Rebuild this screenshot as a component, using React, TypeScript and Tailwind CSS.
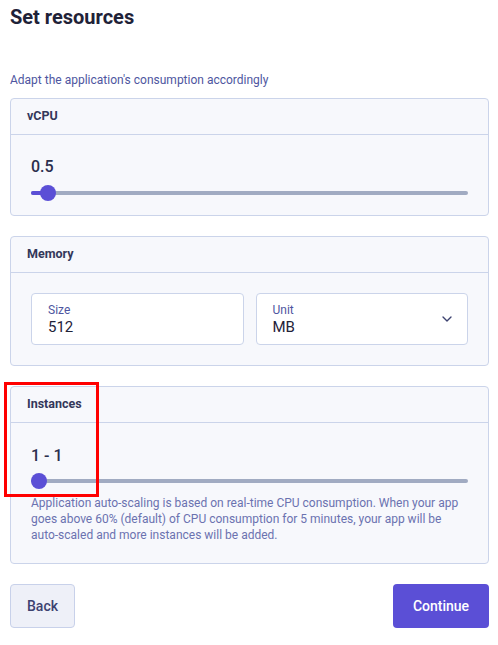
import React from 'react';
import { ChevronDown } from 'lucide-react';

const Card: React.FC<{ title: string; children: React.ReactNode }> = ({ title, children }) => (
    <div className="rounded-[4px] border border-[#cbd4ea] bg-[#f7f8fc]">
        <div className="h-[36px] flex items-center px-[16px] border-b border-[#cbd4ea]">
            <span className="text-[12.5px] font-bold text-[#33375a]">{title}</span>
        </div>
        {children}
    </div>
);

const Slider: React.FC<{ pct: number }> = ({ pct }) => (
    <div className="relative h-[16px] flex items-center">
        <div className="w-full h-[4px] rounded-full bg-[#a1abc2]" />
        <div className="absolute left-0 h-[4px] rounded-full bg-[#5b4fd6]" style={{ width: `${pct}%` }} />
        <div
            className="absolute w-[16px] h-[16px] rounded-full bg-[#5b4fd6]"
            style={{ left: `calc(${pct}% - ${pct === 0 ? 0 : 8}px)` }}
        />
    </div>
);

export default function App() {
    return (
        <div className="relative w-[498px] h-[645px] bg-white pl-[10px] pr-[9px] pt-[4px] font-['Roboto',sans-serif] text-[#2b2e4d]">
            <h1 className="text-[20px] font-bold leading-[26px] text-[#1f2238]">Set resources</h1>
            <p className="mt-[42px] text-[12px] leading-[16px] text-[#4e56a0]">
                Adapt the application's consumption accordingly
            </p>

            <div className="mt-[10px] flex flex-col gap-[20px]">
                {/* vCPU */}
                <Card title="vCPU">
                    <div className="px-[20px] pt-[22px] pb-[14px]">
                        <div className="text-[16px] leading-[20px] font-medium mb-[8px]">0.5</div>
                        <Slider pct={4} />
                    </div>
                </Card>

                {/* Memory */}
                <Card title="Memory">
                    <div className="px-[20px] pt-[20px] pb-[20px] grid grid-cols-2 gap-[12px]">
                        <div className="h-[52px] rounded-[4px] border border-[#cbd4ea] bg-white px-[16px] pt-[9px]">
                            <div className="text-[12px] leading-[15px] text-[#4e56a0]">Size</div>
                            <div className="text-[15px] leading-[18px] text-[#1f2238]">512</div>
                        </div>
                        <div className="h-[52px] rounded-[4px] border border-[#cbd4ea] bg-white pl-[16px] pr-[12px] pt-[9px] flex items-start justify-between">
                            <div>
                                <div className="text-[12px] leading-[15px] text-[#4e56a0]">Unit</div>
                                <div className="text-[15px] leading-[18px] text-[#1f2238]">MB</div>
                            </div>
                            <ChevronDown className="mt-[8px] w-[16px] h-[16px] text-[#3d4270]" strokeWidth={2} />
                        </div>
                    </div>
                </Card>

                {/* Instances */}
                <Card title="Instances">
                    <div className="px-[20px] pt-[23px] pb-[20px]">
                        <div className="text-[16px] leading-[20px] font-medium mb-[7px]">1 - 1</div>
                        <Slider pct={0} />
                        <p className="mt-[6px] text-[12px] leading-[16px] text-[#6b72b0]">
                            Application auto-scaling is based on real-time CPU consumption. When your app goes above 60% (default) of CPU consumption for 5 minutes, your app will be auto-scaled and more instances will be added.
                        </p>
                    </div>
                </Card>
            </div>

            <div className="mt-[20px] flex justify-between">
                <button className="h-[44px] px-[16px] rounded-[4px] border border-[#c8d1ea] bg-[#eef0f8] text-[14px] font-medium text-[#3d4270]">
                    Back
                </button>
                <button className="h-[44px] w-[96px] rounded-[4px] bg-[#5b4fd6] text-[14px] font-medium text-white">
                    Continue
                </button>
            </div>

            {/* highlight annotation */}
            <div className="absolute left-[4px] top-[382px] w-[95px] h-[115px] border-[3px] border-[#f00] pointer-events-none" />
        </div>
    );
}
